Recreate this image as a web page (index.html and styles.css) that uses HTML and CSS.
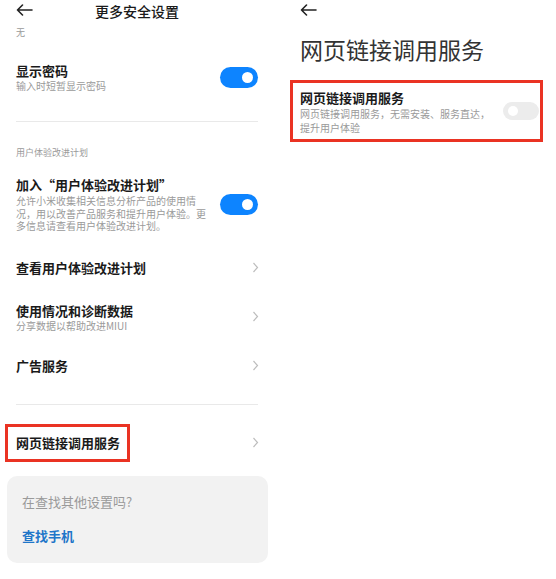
FILE: index.html
```html
<!doctype html>
<html lang="zh-CN">

<head>
  <title>更多安全设置</title>
  <meta charset="utf-8">
  <meta name="viewport" content="width=device-width, initial-scale=1">
  <link rel="stylesheet" href="styles.css">
</head>

<body>
  <!-- left screen: more security settings -->
  <div class="screen screen-left">
    <div class="header">
      <svg class="back" width="17" height="12" viewBox="0 0 17 12">
        <path d="M16 6H1.5M6.5 1L1.5 6l5 5" fill="none" stroke="#222" stroke-width="1.6" stroke-linecap="round" stroke-linejoin="round"/>
      </svg>
      <div class="header-title">更多安全设置</div>
    </div>
    <div class="none-text">无</div>

    <div class="row row-password">
      <div class="row-text">
        <div class="row-title">显示密码</div>
        <div class="row-sub">输入时短暂显示密码</div>
      </div>
      <div class="switch on"><span class="knob"></span></div>
    </div>

    <div class="divider divider-top"></div>
    <div class="section-label">用户体验改进计划</div>

    <div class="row row-join">
      <div class="row-text">
        <div class="row-title">加入“用户体验改进计划”</div>
        <div class="row-desc">允许小米收集相关信息分析产品的使用情<br>况，用以改善产品服务和提升用户体验。更<br>多信息请查看用户体验改进计划。</div>
      </div>
      <div class="switch on"><span class="knob"></span></div>
    </div>

    <div class="row row-link">
      <div class="row-title">查看用户体验改进计划</div>
      <svg class="chevron" width="7" height="11" viewBox="0 0 7 11"><path d="M1.5 1l4 4.5-4 4.5" fill="none" stroke="#bdbdbd" stroke-width="1.2"/></svg>
    </div>

    <div class="row row-usage">
      <div class="row-text">
        <div class="row-title">使用情况和诊断数据</div>
        <div class="row-sub">分享数据以帮助改进MIUI</div>
      </div>
      <svg class="chevron" width="7" height="11" viewBox="0 0 7 11"><path d="M1.5 1l4 4.5-4 4.5" fill="none" stroke="#bdbdbd" stroke-width="1.2"/></svg>
    </div>

    <div class="row row-ads">
      <div class="row-title">广告服务</div>
      <svg class="chevron" width="7" height="11" viewBox="0 0 7 11"><path d="M1.5 1l4 4.5-4 4.5" fill="none" stroke="#bdbdbd" stroke-width="1.2"/></svg>
    </div>

    <div class="divider divider-bottom"></div>

    <div class="row row-web">
      <div class="row-title highlight">网页链接调用服务</div>
      <svg class="chevron" width="7" height="11" viewBox="0 0 7 11"><path d="M1.5 1l4 4.5-4 4.5" fill="none" stroke="#bdbdbd" stroke-width="1.2"/></svg>
    </div>

    <div class="search-card">
      <div class="search-question">在查找其他设置吗?</div>
      <div class="search-link">查找手机</div>
    </div>
  </div>

  <!-- right screen: web link service -->
  <div class="screen screen-right">
    <div class="header">
      <svg class="back" width="17" height="12" viewBox="0 0 17 12">
        <path d="M16 6H1.5M6.5 1L1.5 6l5 5" fill="none" stroke="#222" stroke-width="1.6" stroke-linecap="round" stroke-linejoin="round"/>
      </svg>
    </div>
    <div class="page-title">网页链接调用服务</div>

    <div class="service-box">
      <div class="row-text">
        <div class="row-title">网页链接调用服务</div>
        <div class="row-desc">网页链接调用服务，无需安装、服务直达，<br>提升用户体验</div>
      </div>
      <div class="switch off"><span class="knob"></span></div>
    </div>
  </div>
</body>

</html>
```

FILE: styles.css
```css
html {
  height: 100%;
}

body {
  margin: 0;
  padding: 0;
  width: 556px;
  height: 579px;
  overflow: hidden;
  background-color: #FFFFFF;
  font-family: 'Noto Sans CJK SC', 'Noto Sans', sans-serif;
  color: #1a1a1a;
  display: flex;
}

.screen {
  width: 278px;
  box-sizing: border-box;
}

.screen-left {
  padding: 0 20px 0 16px;
}

.screen-right {
  padding: 0 17px 0 22px;
}

/* header */
.header {
  height: 22px;
  display: flex;
  align-items: center;
}

.back {
  display: block;
  margin-top: -2px;
}

.header-title {
  flex: 1;
  text-align: center;
  font-size: 14px;
  font-weight: 500;
  margin-left: -17px;
  line-height: 22px;
}

.none-text {
  height: 22px;
  line-height: 22px;
  font-size: 9px;
  color: #9a9a9a;
}

/* rows */
.row {
  display: flex;
  align-items: center;
  justify-content: space-between;
}

.row-title {
  font-size: 13px;
  font-weight: 700;
  line-height: 17px;
  color: #1a1a1a;
}

.row-sub {
  font-size: 10px;
  line-height: 14px;
  color: #9a9a9a;
}

.row-desc {
  font-size: 10px;
  line-height: 12.5px;
  color: #9a9a9a;
  margin-top: 2px;
}

.row-password {
  padding: 18px 0;
}

.row-join {
  padding: 17px 0 13px;
}

.row-link {
  padding: 13px 0;
}

.row-usage {
  padding: 13px 0;
}

.row-usage .row-sub {
  line-height: 13px;
}

.row-ads {
  padding: 12px 0 13px;
}

.row-web {
  margin-top: 19px;
}

.chevron {
  display: block;
  margin-right: -1px;
}

.divider {
  height: 1px;
  background-color: #e9e9e9;
}

.divider-top {
  margin-top: 10px;
}

.divider-bottom {
  margin-top: 17px;
}

.section-label {
  margin-top: 24px;
  font-size: 9px;
  line-height: 13px;
  color: #9a9a9a;
}

.highlight {
  border: 3px solid #ea3323;
  padding: 0 7px 0 8px;
  margin-left: -11px;
  line-height: 32px;
}

/* switches */
.switch {
  flex-shrink: 0;
  border-radius: 11px;
  display: flex;
  align-items: center;
  box-sizing: border-box;
}

.switch.on {
  width: 38px;
  height: 21px;
  background-color: #0d84ff;
  justify-content: flex-end;
  padding-right: 5px;
}

.switch.off {
  width: 36px;
  height: 18px;
  background-color: #ececec;
  justify-content: flex-start;
  padding-left: 5px;
  margin-bottom: 4px;
}

.knob {
  width: 11px;
  height: 11px;
  border-radius: 50%;
  background-color: #FFFFFF;
}

.switch.off .knob {
  width: 10px;
  height: 10px;
}

/* search card */
.search-card {
  margin: 14px -10px 0 -9px;
  padding: 16px 15px 17px;
  background-color: #f2f2f2;
  border-radius: 10px;
}

.search-question {
  font-size: 13px;
  line-height: 20px;
  color: #9a9a9a;
}

.search-link {
  margin-top: 14px;
  font-size: 13px;
  line-height: 20px;
  font-weight: 700;
  color: #1f76c9;
}

/* right screen */
.page-title {
  margin-top: 12px;
  font-size: 23px;
  line-height: 30px;
  font-weight: 400;
  color: #333333;
}

.service-box {
  margin: 16px -4px 0 -10px;
  border: 3px solid #ea3323;
  padding: 7px 1px 4px 7px;
  display: flex;
  align-items: center;
  justify-content: space-between;
}

.service-box .row-title {
  line-height: 16px;
}

.service-box .row-desc {
  line-height: 14px;
  margin-top: 1px;
}
```
